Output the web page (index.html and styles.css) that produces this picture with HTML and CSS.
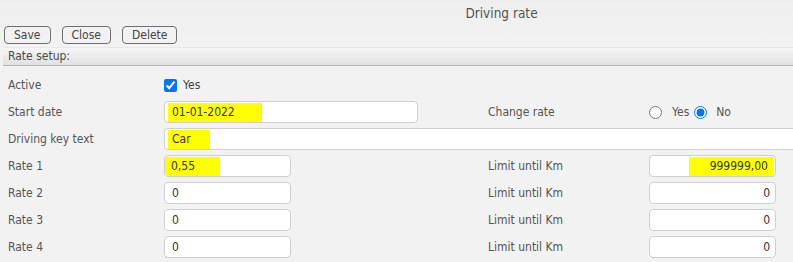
FILE: index.html
```html
<!DOCTYPE html>
<html>
<head>
<meta charset="utf-8">
<link rel="stylesheet" href="styles.css">
</head>
<body>
<div class="page">
  <div class="title">Driving rate</div>
  <div class="toolbar">
    <button class="btn">Save</button>
    <button class="btn">Close</button>
    <button class="btn">Delete</button>
  </div>
  <div class="section-head">Rate setup:</div>
  <div class="form">
    <div class="label">Active</div>
    <div class="field check"><input type="checkbox" checked><span>Yes</span></div>
    <div class="spacer"></div>

    <div class="label">Start date</div>
    <div class="field"><div class="box w-date"><span class="hl hl-date">01-01-2022</span></div></div>
    <div class="label">Change rate</div>
    <div class="field radios">
      <input type="radio" name="cr"><span>Yes</span>
      <input type="radio" name="cr" checked><span>No</span>
    </div>

    <div class="label">Driving key text</div>
    <div class="field wide"><div class="box w-full"><span class="hl hl-car">Car</span></div></div>

    <div class="label">Rate 1</div>
    <div class="field"><div class="box w-num"><span class="hl hl-rate">0,55</span></div></div>
    <div class="label">Limit until Km</div>
    <div class="field"><div class="box w-num right"><span class="hl hl-lim">999999,00</span></div></div>

    <div class="label">Rate 2</div>
    <div class="field"><div class="box w-num"><span class="val">0</span></div></div>
    <div class="label">Limit until Km</div>
    <div class="field"><div class="box w-num right"><span class="val">0</span></div></div>

    <div class="label">Rate 3</div>
    <div class="field"><div class="box w-num"><span class="val">0</span></div></div>
    <div class="label">Limit until Km</div>
    <div class="field"><div class="box w-num right"><span class="val">0</span></div></div>

    <div class="label">Rate 4</div>
    <div class="field"><div class="box w-num"><span class="val">0</span></div></div>
    <div class="label">Limit until Km</div>
    <div class="field"><div class="box w-num right"><span class="val">0</span></div></div>
  </div>
</div>
</body>
</html>
```
FILE: styles.css
```css
html, body {
  margin: 0;
  padding: 0;
  background: #f2f2f2;
  overflow: hidden;
}
.page {
  width: 793px;
  height: 262px;
  font-family: "DejaVu Sans", Verdana, sans-serif;
  font-stretch: condensed;
  font-size: 12px;
  color: #4a4a4a;
  background: linear-gradient(#eeeeee, #f2f2f2 40px);
}
.title {
  height: 26px;
  display: flex;
  align-items: center;
  justify-content: center;
  padding-left: 210px;
  font-size: 13.5px;
  color: #555;
}
.toolbar {
  display: flex;
  gap: 11px;
  padding-left: 4px;
  height: 18px;
}
.btn {
  font-family: inherit;
  font-stretch: condensed;
  font-size: 12px;
  color: #444;
  background: #f2f2f2;
  border: 1px solid #6e6e6e;
  border-radius: 4px;
  height: 18px;
  padding: 0 9px;
  margin: 0;
  line-height: 14px;
}
.section-head {
  margin-top: 3px;
  margin-left: 3px;
  height: 19px;
  box-sizing: border-box;
  border-top: 1px solid #e8e8e8;
  border-bottom: 1px solid #b4b4b4;
  background: linear-gradient(#f6f6f6, #e0e0e0);
  padding-left: 5px;
  line-height: 17px;
  color: #4a4a4a;
}
.form {
  display: grid;
  grid-template-columns: 156px 324px 161px 1fr;
  grid-auto-rows: 22px;
  row-gap: 5px;
  padding: 8px 0 0 8px;
}
.label {
  display: flex;
  align-items: center;
  color: #555;
}
.field {
  display: flex;
  align-items: center;
}
.spacer { grid-column: 3 / 5; }
.wide { grid-column: 2 / 5; margin-right: -20px; }
.check input {
  margin: 0 6px 0 0;
  width: 13px;
  height: 13px;
}
.check span { color: #444; }
.radios input {
  margin: 0;
  width: 13px;
  height: 13px;
}
.radios span { color: #555; margin: 0 5px 0 10px; }
.radios span:last-child { margin: 0 0 0 9px; }
.box {
  box-sizing: border-box;
  height: 22px;
  background: #fff;
  border: 1px solid #cfcfcf;
  border-radius: 4px;
  display: flex;
  align-items: center;
  color: #333;
  padding: 0 3px;
}
.w-date { width: 254px; }
.w-num { width: 127px; }
.w-full { width: 100%; border-right: none; border-radius: 4px 0 0 4px; }
.right { justify-content: flex-end; padding-right: 5px; }
.val { padding-left: 4px; }
.right .val { padding: 0; }
.hl {
  background: #ffff00;
  height: 19px;
  display: flex;
  align-items: center;
}
.hl-date { padding: 0 27px 0 4px; }
.hl-car { padding: 0 19px 0 4px; }
.hl-rate { padding: 0 25px 0 6px; margin-left: -3px; }
.hl-lim { padding: 0 6px 0 21px; margin-right: -4px; }
```
